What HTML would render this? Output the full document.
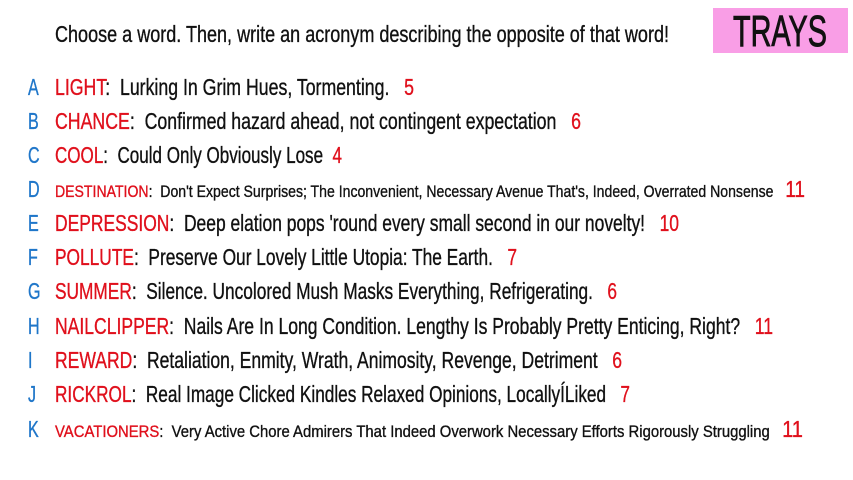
<!DOCTYPE html>
<html><head><meta charset="utf-8">
<style>
html,body{margin:0;padding:0;background:#fff;width:853px;height:480px;overflow:hidden;}
body{position:relative;font-family:"Liberation Sans Narrow","Liberation Sans",sans-serif;color:#111;}
.l{position:absolute;white-space:nowrap;font-size:23px;line-height:24px;transform-origin:0 50%;-webkit-text-stroke:0.35px currentColor;}
.ltr{position:absolute;left:28px;font-size:23px;line-height:24px;color:#1f76c9;transform:scaleX(0.7);transform-origin:0 50%;-webkit-text-stroke:0.35px currentColor;}
.r{color:#e0101c;}
.s{font-size:17px;}
.box{position:absolute;left:713px;top:8px;width:135px;height:45px;background:#f99ee6;}
.trays{position:absolute;left:733px;top:9px;font-size:44px;line-height:46px;font-weight:normal;-webkit-text-stroke:0.9px #111;transform-origin:0 50%;white-space:nowrap;}
</style></head><body>
<div class="box"></div>
<div class="trays" data-w="94">TRAYS</div>
<div class="l" style="left:55px;top:22px" data-w="614">Choose a word. Then, write an acronym describing the opposite of that word!</div>

<div class="ltr" style="top:75px">A</div>
<div class="l" style="left:55px;top:75px" data-w="359"><span class="r">LIGHT</span>:&nbsp; Lurking In Grim Hues, Tormenting. &nbsp;&nbsp;<span class="r">5</span></div>
<div class="ltr" style="top:109px">B</div>
<div class="l" style="left:55px;top:109px" data-w="526"><span class="r">CHANCE</span>:&nbsp; Confirmed hazard ahead, not contingent expectation &nbsp;&nbsp;<span class="r">6</span></div>
<div class="ltr" style="top:143px">C</div>
<div class="l" style="left:55px;top:143px" data-w="287"><span class="r">COOL</span>:&nbsp; Could Only Obviously Lose &nbsp;<span class="r">4</span></div>
<div class="ltr" style="top:177px">D</div>
<div class="l" style="left:55px;top:177px" data-w="750"><span class="s"><span class="r">DESTINATION</span>:&nbsp; Don't Expect Surprises; The Inconvenient, Necessary Avenue That's, Indeed, Overrated Nonsense &nbsp;&nbsp;</span><span class="r">11</span></div>
<div class="ltr" style="top:211px">E</div>
<div class="l" style="left:55px;top:211px" data-w="624"><span class="r">DEPRESSION</span>:&nbsp; Deep elation pops 'round every small second in our novelty! &nbsp;&nbsp;<span class="r">10</span></div>
<div class="ltr" style="top:245px">F</div>
<div class="l" style="left:55px;top:245px" data-w="462"><span class="r">POLLUTE</span>:&nbsp; Preserve Our Lovely Little Utopia: The Earth. &nbsp;&nbsp;<span class="r">7</span></div>
<div class="ltr" style="top:279px">G</div>
<div class="l" style="left:55px;top:279px" data-w="562"><span class="r">SUMMER</span>:&nbsp; Silence. Uncolored Mush Masks Everything, Refrigerating. &nbsp;&nbsp;<span class="r">6</span></div>
<div class="ltr" style="top:314px">H</div>
<div class="l" style="left:55px;top:314px" data-w="718"><span class="r">NAILCLIPPER</span>:&nbsp; Nails Are In Long Condition. Lengthy Is Probably Pretty Enticing, Right? &nbsp;&nbsp;<span class="r">11</span></div>
<div class="ltr" style="top:348px">I</div>
<div class="l" style="left:55px;top:348px" data-w="567"><span class="r">REWARD</span>:&nbsp; Retaliation, Enmity, Wrath, Animosity, Revenge, Detriment &nbsp;&nbsp;<span class="r">6</span></div>
<div class="ltr" style="top:382px">J</div>
<div class="l" style="left:55px;top:382px" data-w="575"><span class="r">RICKROL</span>:&nbsp; Real Image Clicked Kindles Relaxed Opinions, LocallyÍLiked &nbsp;&nbsp;<span class="r">7</span></div>
<div class="ltr" style="top:417px">K</div>
<div class="l" style="left:55px;top:417px" data-w="748"><span class="s"><span class="r">VACATIONERS</span>:&nbsp; Very Active Chore Admirers That Indeed Overwork Necessary Efforts Rigorously Struggling &nbsp;&nbsp;</span><span class="r">11</span></div>

<script>
document.querySelectorAll('[data-w]').forEach(function(e){
  var w=e.getBoundingClientRect().width;
  var t=parseFloat(e.getAttribute('data-w'));
  if(w>0) e.style.transform='scaleX('+(t/w)+')';
});
</script>
</body></html>
